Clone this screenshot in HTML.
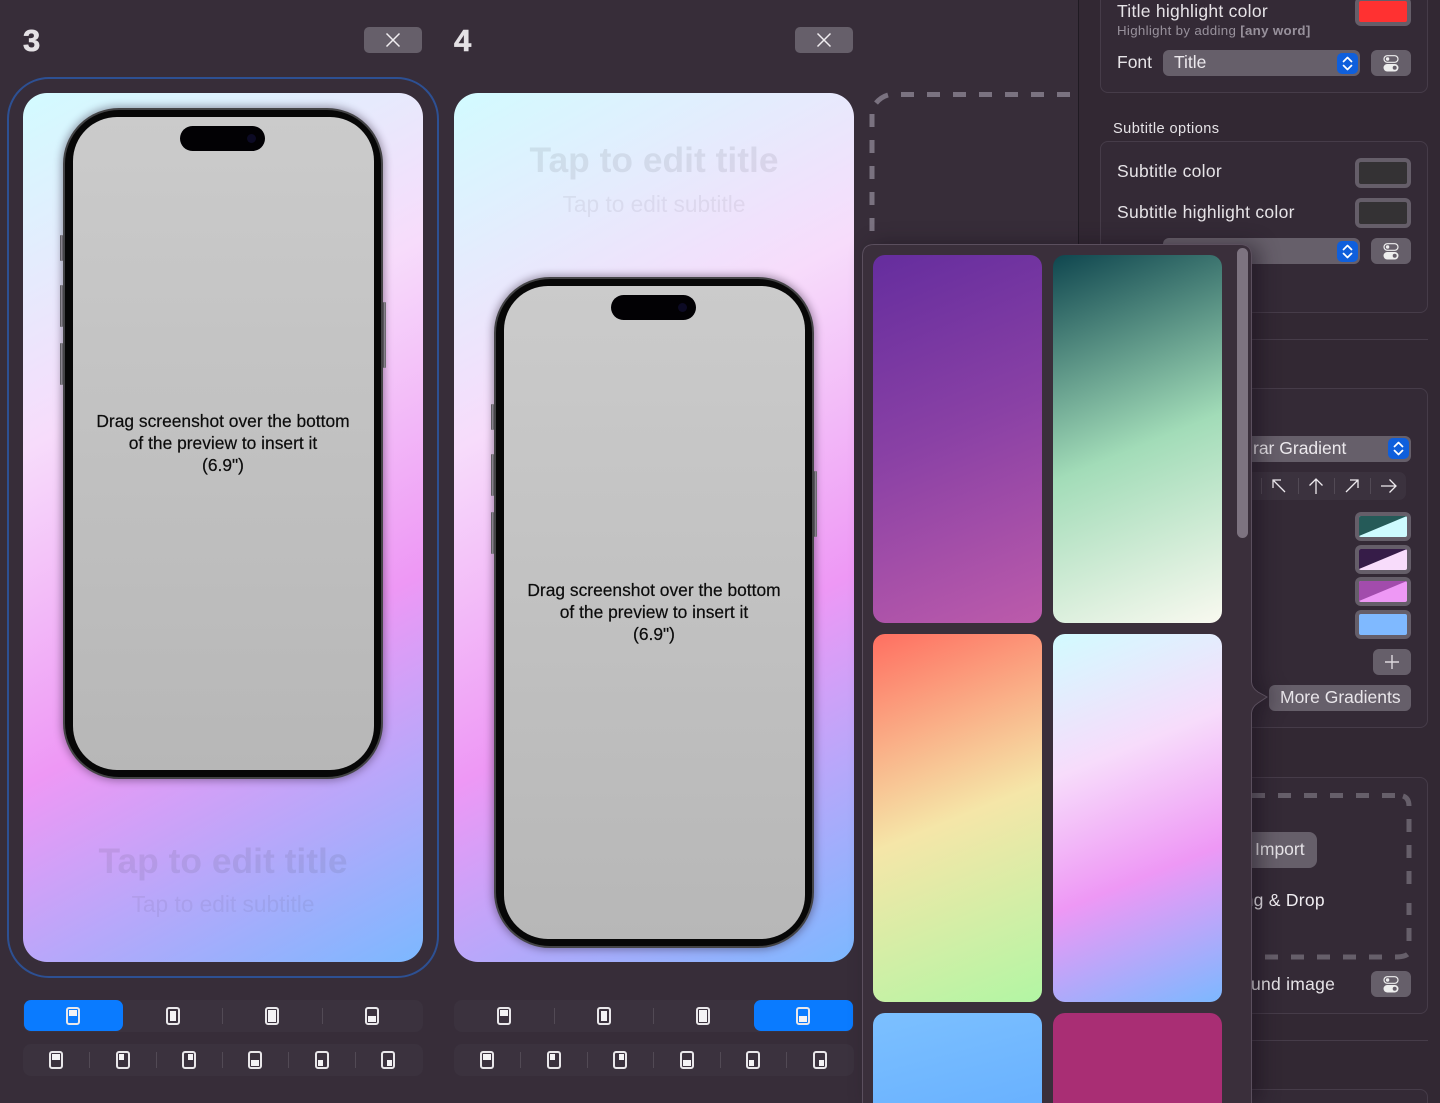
<!DOCTYPE html>
<html><head><meta charset="utf-8"><style>
*{box-sizing:border-box}
html,body{margin:0;padding:0;width:1440px;height:1103px;overflow:hidden;background:#372d39}
body{position:relative;font-family:"Liberation Sans",sans-serif;color:#e9e6ea}
.a{position:absolute}
.t{position:absolute;white-space:nowrap;line-height:22px;font-size:17.5px;color:#e6e3e7}
.ls{letter-spacing:.27px}
.num{position:absolute;font-weight:700;font-size:31px;color:#e4e1e5;line-height:34px;-webkit-text-stroke:.6px #e4e1e5}
.close{position:absolute;width:58px;height:26px;border-radius:5px;background:#665f6a}
.sel{position:absolute;left:7px;top:77px;width:432px;height:901px;border:2px solid #2d5093;border-radius:42px}
.card{position:absolute;top:93px;width:400px;height:869px;border-radius:24px;overflow:hidden;background:linear-gradient(152deg,#d2fbff 0%,#f7dcfb 33%,#ee98f5 64%,#7cb8ff 100%)}
.ttl{position:absolute;left:0;width:400px;text-align:center;font-weight:700;font-size:35.4px;line-height:42px;color:rgba(60,55,70,.1)}
.sub{position:absolute;left:0;width:400px;text-align:center;font-size:22.7px;line-height:26px;color:rgba(60,55,70,.08)}
.phone{position:absolute;left:40px;width:320px;height:671px;border-radius:56px;background:#070707;border:2px solid #444446;box-shadow:0 0 8px 2px rgba(40,25,50,.38)}
.screen{position:absolute;left:8px;top:7px;width:301px;height:653px;border-radius:44px;background:linear-gradient(180deg,#cbcbcb,#b7b7b7)}
.island{position:absolute;left:115px;top:16px;width:85px;height:25px;border-radius:13px;background:#020104}
.lens{position:absolute;left:67px;top:8px;width:9px;height:9px;border-radius:50%;background:#0c0a24}
.msg{position:absolute;left:-.5px;top:293px;width:301px;text-align:center;color:#0c0c0c;font-size:17.4px;line-height:22px;-webkit-text-stroke:.2px #0c0c0c}
.btn{position:absolute;width:3px;background:linear-gradient(90deg,#4a4a4c,#b0aeb3 55%,#5a5a5c);border-radius:1px}
.seg{position:absolute;height:32px;border-radius:8px;background:#3b323e}
.act{position:absolute;height:31px;width:99px;border-radius:7px;background:#0a7bff}
.sp{position:absolute;width:1px;height:16px;background:#524a55}
.ic{position:absolute;width:14px;height:18px;border:2px solid #e9e7ea;border-radius:3px;background:transparent}
.ic i{position:absolute;background:#f4f3f5;display:block}
.top i{left:1px;right:1px;top:1px;height:6px}
.bot i{left:1px;right:1px;bottom:1px;height:6px}
.mid i{left:2px;right:2px;top:2px;bottom:2px}
.full i{left:1px;right:1px;top:1px;bottom:1px}
.tl i{left:1px;top:1px;width:5px;height:6px}
.tr i{right:1px;top:1px;width:5px;height:6px}
.bl i{left:1px;bottom:1px;width:5px;height:6px}
.br i{right:1px;bottom:1px;width:5px;height:6px}
.box{position:absolute;left:1100px;width:328px;border:1px solid #463c49;border-radius:8px;background:#342a36}
.well{position:absolute;left:1355px;width:56px;border-radius:6px;background:#655e69;padding:4px}
.well b{display:block;height:100%;border-radius:2px}
.pop{position:absolute;height:26px;border-radius:6px;background:#665f6a}
.step{position:absolute;width:21px;height:21px;border-radius:5px;background:#0f5fdc}
.tgl{position:absolute;left:1371px;width:40px;height:26px;border-radius:6px;background:#665f6a}
.gs{position:absolute;width:169px;border-radius:12px}
</style></head><body>

<!-- right panel -->
<div class="a" style="left:1078px;top:0;width:362px;height:1103px;background:#322833;border-left:1px solid #1f1a22"></div>
<div class="box" style="top:-20px;height:113px"></div>
<div class="box" style="top:141px;height:172px"></div>
<div class="a" style="left:1100px;top:339px;width:328px;height:1px;background:#463c49"></div>
<div class="box" style="top:388px;height:340px"></div>
<div class="box" style="top:777px;height:237px"></div>
<div class="a" style="left:1100px;top:1040px;width:328px;height:1px;background:#463c49"></div>
<div class="box" style="top:1089px;height:40px"></div>

<div class="t ls" style="left:1117px;top:0">Title highlight color</div>
<div class="t" style="left:1117px;top:21px;font-size:13.3px;line-height:20px;color:#98919c;letter-spacing:.32px">Highlight by adding <b>[any word]</b></div>
<div class="well" style="top:-3px;height:29px"><b style="background:#ff3131"></b></div>
<div class="t" style="left:1117px;top:51px">Font</div>
<div class="pop" style="left:1163px;top:50px;width:197px"></div>
<div class="t" style="left:1174px;top:51px;color:#ece9ed">Title</div>
<div class="step" style="left:1337px;top:53px"></div>
<svg class="a" style="left:1337px;top:53px" width="21" height="21" fill="none" stroke="#fff" stroke-width="1.7" stroke-linecap="round" stroke-linejoin="round"><path d="M6.5 8.5l4-4 4 4M6.5 12.5l4 4 4-4"/></svg>
<div class="tgl" style="top:50px"></div>
<svg class="a" style="left:1371px;top:50px" width="40" height="26"><rect x="13" y="5.7" width="14" height="6.6" rx="3.3" fill="none" stroke="#eee" stroke-width="1.2"/><circle cx="16.6" cy="9" r="1.7" fill="#eee"/><rect x="12.5" y="14" width="15" height="7.5" rx="3.7" fill="#eee"/><circle cx="23.7" cy="17.7" r="2" fill="#665f6a"/></svg>

<div class="t" style="left:1113px;top:118px;font-size:14.6px;letter-spacing:.42px">Subtitle options</div>
<div class="t ls" style="left:1117px;top:160px">Subtitle color</div>
<div class="well" style="top:158px;height:30px"><b style="background:#343234"></b></div>
<div class="t ls" style="left:1117px;top:200.500px">Subtitle highlight color</div>
<div class="well" style="top:198px;height:30px"><b style="background:#343234"></b></div>
<div class="pop" style="left:1163px;top:238px;width:197px"></div>
<div class="step" style="left:1337px;top:241px"></div>
<svg class="a" style="left:1337px;top:241px" width="21" height="21" fill="none" stroke="#fff" stroke-width="1.7" stroke-linecap="round" stroke-linejoin="round"><path d="M6.5 8.5l4-4 4 4M6.5 12.5l4 4 4-4"/></svg>
<div class="tgl" style="top:238px"></div>
<svg class="a" style="left:1371px;top:238px" width="40" height="26"><rect x="13" y="5.7" width="14" height="6.6" rx="3.3" fill="none" stroke="#eee" stroke-width="1.2"/><circle cx="16.6" cy="9" r="1.7" fill="#eee"/><rect x="12.5" y="14" width="15" height="7.5" rx="3.7" fill="#eee"/><circle cx="23.7" cy="17.7" r="2" fill="#665f6a"/></svg>

<div class="pop" style="left:1200px;top:436px;width:211px"></div>
<div class="t" style="left:1253px;top:437px;color:#ece9ed">rar Gradient</div>
<div class="step" style="left:1388px;top:438px"></div>
<svg class="a" style="left:1388px;top:438px" width="21" height="21" fill="none" stroke="#fff" stroke-width="1.7" stroke-linecap="round" stroke-linejoin="round"><path d="M6.5 8.5l4-4 4 4M6.5 12.5l4 4 4-4"/></svg>
<div class="a" style="left:1200px;top:472px;width:206px;height:28px;border-radius:7px;background:#3b323e"></div>
<div class="sp" style="left:1261px;top:478px"></div><div class="sp" style="left:1298px;top:478px"></div><div class="sp" style="left:1334px;top:478px"></div><div class="sp" style="left:1370px;top:478px"></div>
<svg class="a" style="left:1268px;top:474px" width="130" height="24" fill="none" stroke="#eeeaef" stroke-width="1.3"><path d="M17 18L5 6M5 14V6h8"/><path d="M48 20V5M41.500 11.500L48 5l6.500 6.500"/><path d="M78 18L90 6M82 6h8v8"/><path d="M113 12h15M121.500 5.500L128 12l-6.500 6.500"/></svg>

<svg class="a" style="left:1355px;top:512px" width="56" height="128">
<g><rect width="56" height="29" rx="6" fill="#655e69"/><rect x="4" y="4" width="48" height="21" rx="2" fill="#cdfbff"/><path d="M4 24V6q0-2 2-2h44q1 0 2 0z" fill="#255a58"/></g>
<g transform="translate(0,33)"><rect width="56" height="29" rx="6" fill="#655e69"/><rect x="4" y="4" width="48" height="21" rx="2" fill="#f8dcfb"/><path d="M4 24V6q0-2 2-2h44q1 0 2 0z" fill="#361c48"/></g>
<g transform="translate(0,65)"><rect width="56" height="29" rx="6" fill="#655e69"/><rect x="4" y="4" width="48" height="21" rx="2" fill="#ee98f5"/><path d="M4 24V6q0-2 2-2h44q1 0 2 0z" fill="#a24cac"/></g>
<g transform="translate(0,98)"><rect width="56" height="29" rx="6" fill="#655e69"/><rect x="4" y="4" width="48" height="21" rx="2" fill="#7fb9ff"/></g>
</svg>
<div class="pop" style="left:1373px;top:649px;width:38px"></div>
<svg class="a" style="left:1373px;top:649px" width="38" height="26" stroke="#ddd9de" stroke-width="1.4"><path d="M19 6v14M12 13h14"/></svg>
<div class="pop" style="left:1269px;top:685px;width:142px"></div>
<div class="t" style="left:1280px;top:686px;color:#e9e6ea">More Gradients</div>

<svg class="a" style="left:1240px;top:785px" width="180" height="180" fill="none" stroke="#665f6a" stroke-width="5">
<path d="M12 10.500H168M169 21Q169 13 163 11" stroke-dasharray="13 13"/>
<path d="M169 34V47M169 60V73M169 86V99M169 118V130M169 143V156"/>
<path d="M25 172H155M155 172Q165 172 168 169" stroke-dasharray="13 13"/>
</svg>
<div class="a" style="left:1200px;top:832px;width:117px;height:36px;border-radius:8px;background:#665f6a"></div>
<div class="t" style="left:1255px;top:838px;color:#e6e3e7">Import</div>
<div class="t ls" style="left:1239.500px;top:889px;color:#f0edf1">ing &amp; Drop</div>
<div class="t ls" style="left:1251px;top:973px">und image</div>
<div class="tgl" style="top:971px"></div>
<svg class="a" style="left:1371px;top:971px" width="40" height="26"><rect x="13" y="5.700" width="14" height="6.600" rx="3.300" fill="none" stroke="#eee" stroke-width="1.200"/><circle cx="16.600" cy="9" r="1.700" fill="#eee"/><rect x="12.500" y="14" width="15" height="7.500" rx="3.700" fill="#eee"/><circle cx="23.700" cy="17.700" r="2" fill="#665f6a"/></svg>

<!-- main dashed -->
<svg class="a" style="left:865px;top:85px" width="213" height="160" fill="none" stroke="#7a7280" stroke-width="5">
<path d="M36 9.500H205" stroke-dasharray="13 13"/>
<path d="M7 29V42M7 55V68M7 81V94M7 107V120M7 133V146"/>
<path d="M11 18Q16 12 23 10"/>
</svg>

<!-- column 3 -->
<div class="num" style="left:23px;top:24px">3</div>
<div class="close" style="left:364px;top:27px"></div>
<svg class="a" style="left:364px;top:27px" width="58" height="26" stroke="#f0eef1" stroke-width="1.500"><path d="M22.500 6.500l13 13M35.500 6.500l-13 13"/></svg>
<div class="sel"></div>
<div class="card" style="left:23px">
  <div class="ttl" style="top:747px">Tap to edit title</div>
  <div class="sub" style="top:798px">Tap to edit subtitle</div>
  <div class="btn" style="left:37px;top:142px;height:26px"></div>
  <div class="btn" style="left:37px;top:192px;height:42px"></div>
  <div class="btn" style="left:37px;top:250px;height:42px"></div>
  <div class="btn" style="left:360px;top:209px;height:66px"></div>
  <div class="phone" style="top:15px"><div class="screen"><div class="msg">Drag screenshot over the bottom<br>of the preview to insert it<br>(6.9")</div></div><div class="island"><div class="lens"></div></div></div>
</div>

<!-- column 4 -->
<div class="num" style="left:454px;top:24px">4</div>
<div class="close" style="left:795px;top:27px"></div>
<svg class="a" style="left:795px;top:27px" width="58" height="26" stroke="#f0eef1" stroke-width="1.500"><path d="M22.500 6.500l13 13M35.500 6.500l-13 13"/></svg>
<div class="card" style="left:454px">
  <div class="ttl" style="top:46px">Tap to edit title</div>
  <div class="sub" style="top:98px">Tap to edit subtitle</div>
  <div class="btn" style="left:37px;top:311px;height:26px"></div>
  <div class="btn" style="left:37px;top:361px;height:42px"></div>
  <div class="btn" style="left:37px;top:419px;height:42px"></div>
  <div class="btn" style="left:360px;top:378px;height:66px"></div>
  <div class="phone" style="top:184px"><div class="screen"><div class="msg">Drag screenshot over the bottom<br>of the preview to insert it<br>(6.9")</div></div><div class="island"><div class="lens"></div></div></div>
</div>

<!-- segmented 3 -->
<div class="seg" style="left:23px;top:1000px;width:400px"></div>
<div class="act" style="left:24px;top:1000px"></div>
<div class="ic top" style="left:66px;top:1007px"><i></i></div>
<div class="ic mid" style="left:166px;top:1007px"><i></i></div>
<div class="ic full" style="left:265px;top:1007px"><i></i></div>
<div class="ic bot" style="left:365px;top:1007px"><i></i></div>
<div class="sp" style="left:222px;top:1008px"></div><div class="sp" style="left:322px;top:1008px"></div>
<div class="seg" style="left:23px;top:1044px;width:400px"></div>
<div class="ic top" style="left:49px;top:1051px"><i></i></div>
<div class="ic tl" style="left:116px;top:1051px"><i></i></div>
<div class="ic tr" style="left:182px;top:1051px"><i></i></div>
<div class="ic bot" style="left:248px;top:1051px"><i></i></div>
<div class="ic bl" style="left:315px;top:1051px"><i></i></div>
<div class="ic br" style="left:381px;top:1051px"><i></i></div>
<div class="sp" style="left:89px;top:1052px"></div><div class="sp" style="left:156px;top:1052px"></div><div class="sp" style="left:222px;top:1052px"></div><div class="sp" style="left:288px;top:1052px"></div><div class="sp" style="left:355px;top:1052px"></div>

<!-- segmented 4 -->
<div class="seg" style="left:454px;top:1000px;width:400px"></div>
<div class="act" style="left:754px;top:1000px"></div>
<div class="ic top" style="left:497px;top:1007px"><i></i></div>
<div class="ic mid" style="left:597px;top:1007px"><i></i></div>
<div class="ic full" style="left:696px;top:1007px"><i></i></div>
<div class="ic bot" style="left:796px;top:1007px"><i></i></div>
<div class="sp" style="left:554px;top:1008px"></div><div class="sp" style="left:653px;top:1008px"></div>
<div class="seg" style="left:454px;top:1044px;width:400px"></div>
<div class="ic top" style="left:480px;top:1051px"><i></i></div>
<div class="ic tl" style="left:547px;top:1051px"><i></i></div>
<div class="ic tr" style="left:613px;top:1051px"><i></i></div>
<div class="ic bot" style="left:680px;top:1051px"><i></i></div>
<div class="ic bl" style="left:746px;top:1051px"><i></i></div>
<div class="ic br" style="left:813px;top:1051px"><i></i></div>
<div class="sp" style="left:520px;top:1052px"></div><div class="sp" style="left:587px;top:1052px"></div><div class="sp" style="left:653px;top:1052px"></div><div class="sp" style="left:720px;top:1052px"></div><div class="sp" style="left:786px;top:1052px"></div>

<!-- popover -->
<svg class="a" style="left:856px;top:238px;filter:drop-shadow(8px 0 10px rgba(20,12,24,.45))" width="420" height="865"><path d="M6.500 18Q6.500 6.500 18 6.500H384Q395.500 6.500 395.500 18V444Q396 450 402 454L411 459L402 465Q396 469 395.500 475V866H6.500Z" fill="#3a2f3b" stroke="#5b4f5e" stroke-width="1"/></svg>
<div class="gs" style="left:873px;top:255px;height:368px;background:linear-gradient(158deg,#652d9e,#8a41a5 48%,#bc5bab)"></div>
<div class="gs" style="left:1053px;top:255px;height:368px;background:linear-gradient(158deg,#0f464f 0%,#a2dcb8 52%,#f9f9f0 100%)"></div>
<div class="gs" style="left:873px;top:633.500px;height:368.500px;background:linear-gradient(158deg,#ff6f61 0%,#f5e6a8 50%,#b2f6a4 100%)"></div>
<div class="gs" style="left:1053px;top:633.500px;height:368.500px;background:linear-gradient(158deg,#d2fbff 0%,#f7dcfb 33%,#ee98f5 64%,#7cb8ff 100%)"></div>
<div class="gs" style="left:873px;top:1013px;height:140px;background:linear-gradient(165deg,#7cc0ff,#62acff)"></div>
<div class="gs" style="left:1053px;top:1013px;height:140px;background:#a92e74"></div>
<div class="a" style="left:1237px;top:248px;width:11px;height:290px;border-radius:6px;background:#7d7380"></div>
</body></html>
